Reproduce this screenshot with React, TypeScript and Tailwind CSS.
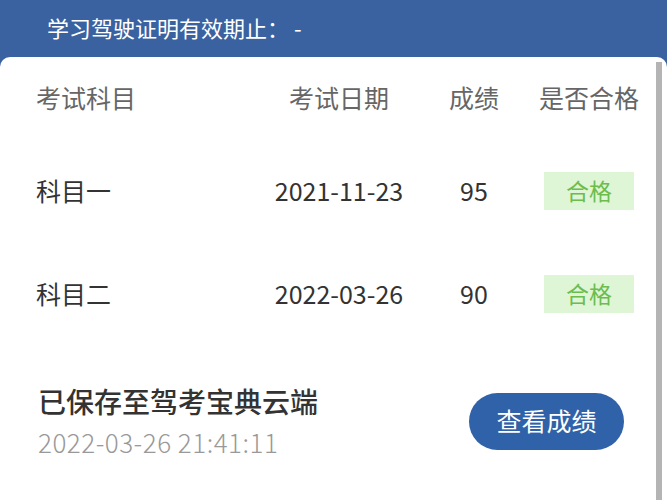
import React from "react";

const font = { fontFamily: '"Noto Sans CJK SC", "Noto Sans", sans-serif' };

function Badge() {
  return (
    <div className="w-[90px] h-[38px] bg-[#def5d6] text-[#6cbd4c] text-[23px] flex items-center justify-center">
      合格
    </div>
  );
}

export default function App() {
  const rows = [
    { name: "科目一", date: "2021-11-23", score: "95" },
    { name: "科目二", date: "2022-03-26", score: "90" },
  ];
  return (
    <div className="w-[667px] h-[500px] overflow-hidden bg-[#3a62a0] flex flex-col" style={font}>
      <div className="h-[57px] shrink-0 flex items-center pl-[47px] pb-[2px] text-white text-[22px] whitespace-pre">
        学习驾驶证明有效期止： -
      </div>
      <div className="flex-1 bg-white rounded-t-[10px] flex">
        <div className="flex-1 flex flex-col">
          <div className="grid grid-cols-[224px_158px_112px_118px] pl-[36px] h-[81px] items-center text-[25px] text-[#666]">
            <div>考试科目</div>
            <div className="text-center">考试日期</div>
            <div className="text-center">成绩</div>
            <div className="text-center">是否合格</div>
          </div>
          {rows.map((r, i) => (
            <div
              key={r.name}
              className={`grid grid-cols-[224px_158px_112px_118px] pl-[36px] items-center text-[25px] text-[#333] ${i === 0 ? "h-[105px]" : "h-[101px]"}`}
            >
              <div>{r.name}</div>
              <div className="text-center">{r.date}</div>
              <div className="text-center">{r.score}</div>
              <div className="flex justify-center">
                <Badge />
              </div>
            </div>
          ))}
          <div className="flex items-center pl-[38px] pr-[32px] pt-[39px]">
            <div className="flex-1 flex flex-col">
              <div className="text-[28px] text-[#333] font-medium leading-[36px]">已保存至驾考宝典云端</div>
              <div className="text-[26px] text-[#999] font-light tracking-[0.5px] leading-[30px] mt-[8px]">2022-03-26 21:41:11</div>
            </div>
            <button className="w-[155px] h-[57px] mt-[2px] rounded-full bg-[#2f62a8] text-white text-[25px] flex items-center justify-center">
              查看成绩
            </button>
          </div>
        </div>
        <div className="w-[6px] bg-[#b4b4b4] mt-[5px] shrink-0" />
        <div className="w-[5px] shrink-0" />
      </div>
    </div>
  );
}
